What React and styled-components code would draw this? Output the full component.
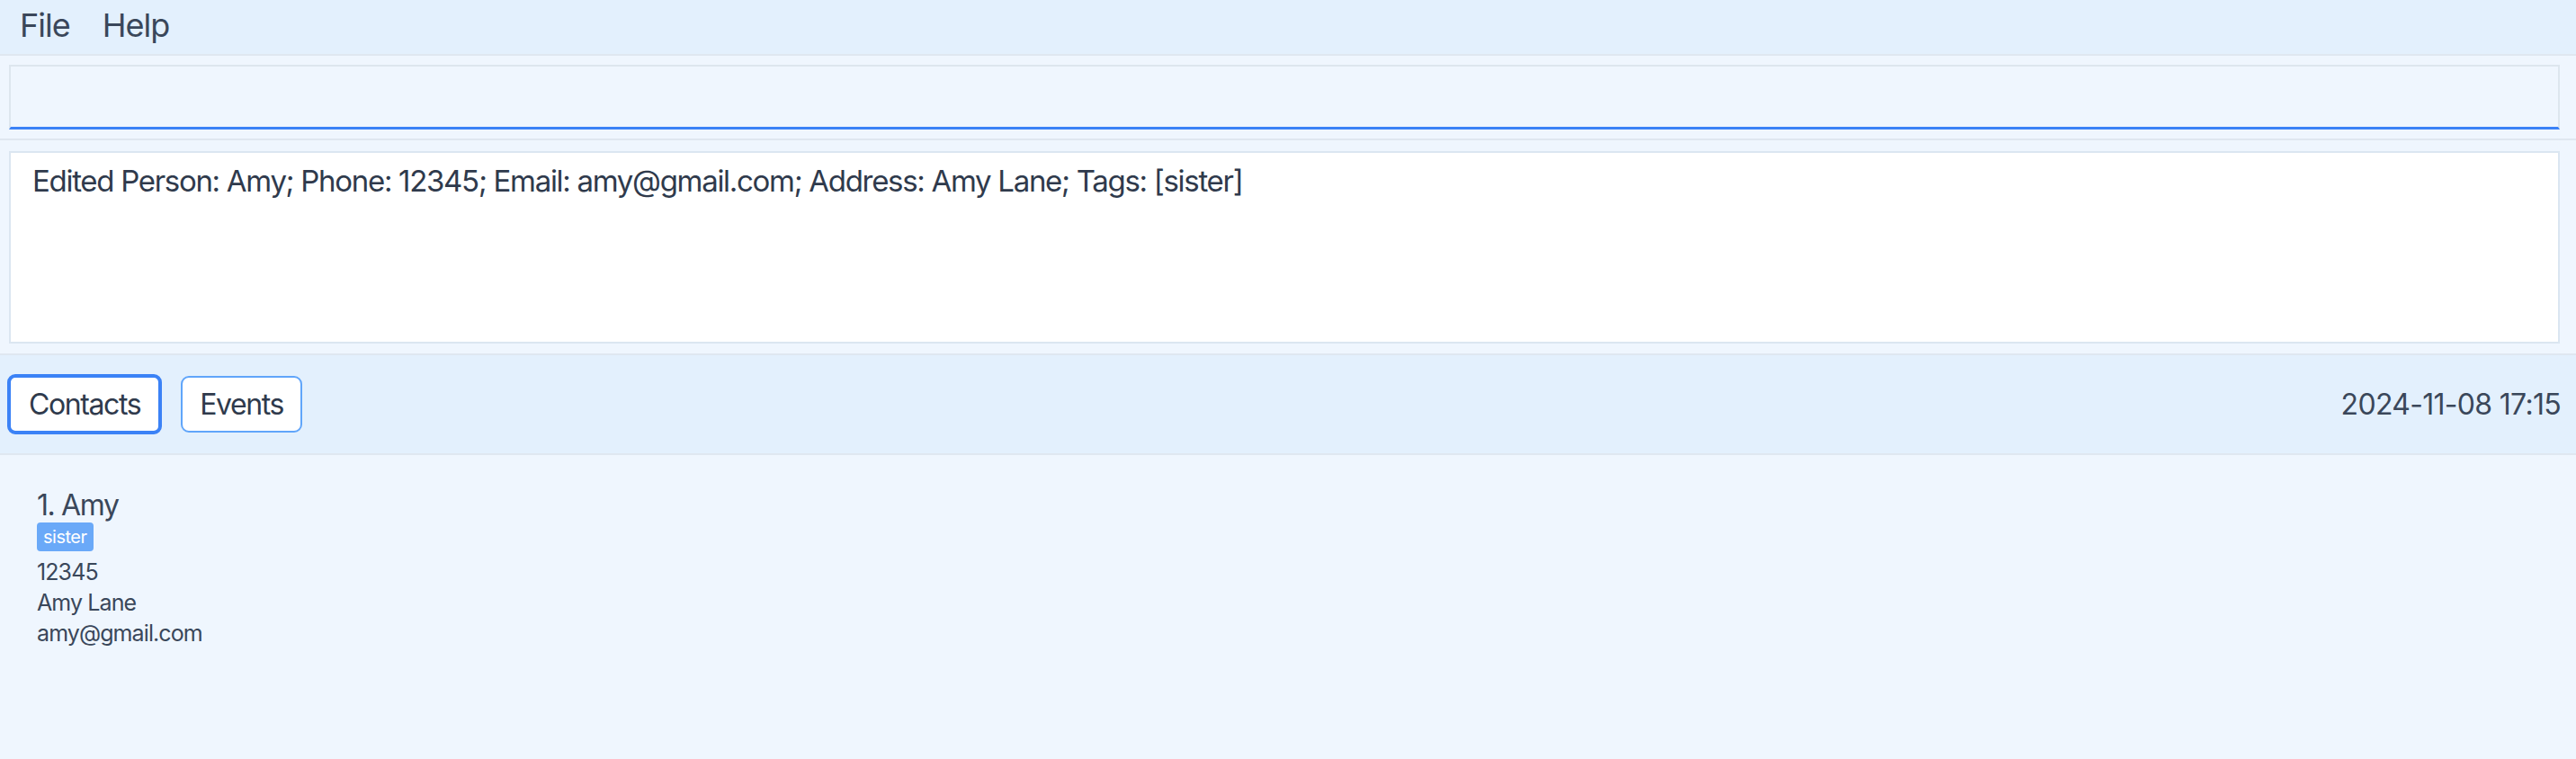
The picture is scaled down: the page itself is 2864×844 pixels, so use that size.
import styled, { createGlobalStyle } from "styled-components";

const GlobalStyle = createGlobalStyle`
  html, body {
    margin: 0;
    padding: 0;
    background: #eff6fe;
    font-family: Inter, "Noto Sans", sans-serif;
    color: #374357;
  }
  * {
    box-sizing: border-box;
  }
`;

const App = () => {
  return (
    <>
      <GlobalStyle />
      <Page>
        <MenuBar>
          <MenuItem>File</MenuItem>
          <MenuItem>Help</MenuItem>
        </MenuBar>
        <CommandArea>
          <CommandInput type="text" />
        </CommandArea>
        <ResultArea>
          <ResultBox>
            Edited Person: Amy; Phone: 12345; Email: amy@gmail.com; Address: Amy Lane; Tags: [sister]
          </ResultBox>
        </ResultArea>
        <TabBar>
          <Tabs>
            <TabButton $active>Contacts</TabButton>
            <TabButton>Events</TabButton>
          </Tabs>
          <Clock>2024-11-08 17:15</Clock>
        </TabBar>
        <ListPanel>
          <Card>
            <Name>1. Amy</Name>
            <TagRow>
              <Tag>sister</Tag>
            </TagRow>
            <Field>12345</Field>
            <Field>Amy Lane</Field>
            <Field>amy@gmail.com</Field>
          </Card>
        </ListPanel>
      </Page>
    </>
  );
};

export const Page = styled.div`
  width: 100%;
  min-height: 844px;
  display: flex;
  flex-direction: column;
  background: #eff6fe;
`;
export const MenuBar = styled.div`
  height: 62px;
  display: flex;
  align-items: center;
  gap: 36px;
  padding: 0 0 4px 22px;
  background: #e3f0fd;
  border-bottom: 2px solid #dfe7f0;
`;
export const MenuItem = styled.span`
  font-size: 36px;
  font-weight: 400;
  letter-spacing: -1px;
  color: #3a475a;
`;
export const CommandArea = styled.div`
  padding: 10px 18px 10px 10px;
  border-bottom: 2px solid #dfe7f0;
`;
export const CommandInput = styled.input`
  display: block;
  width: 100%;
  height: 72px;
  margin: 0;
  background: #eff6fe;
  border: 2px solid #dde6ee;
  border-bottom: 3px solid #3b82f6;
  outline: none;
  font-family: inherit;
  font-size: 32px;
  padding: 0 20px;
`;
export const ResultArea = styled.div`
  padding: 12px 18px 11px 10px;
  border-bottom: 2px solid #dfe7f0;
`;
export const ResultBox = styled.div`
  height: 214px;
  background: #ffffff;
  border: 2px solid #dbe6f1;
  padding: 12px 24px;
  font-size: 33px;
  letter-spacing: -1.3px;
  line-height: 1.2;
  color: #2f3a4c;
`;
export const TabBar = styled.div`
  height: 111px;
  display: flex;
  align-items: center;
  justify-content: space-between;
  padding: 0 17px 0 8px;
  background: #e3f0fd;
  border-bottom: 2px solid #dfe7f0;
`;
export const Tabs = styled.div`
  display: flex;
  align-items: center;
  gap: 21px;
`;
export const TabButton = styled.button`
  height: ${(p) => (p.$active ? "67px" : "63px")};
  padding: 0 ${(p) => (p.$active ? "20px" : "19px")};
  background: #ffffff;
  border: ${(p) => (p.$active ? "4px solid #3b82f6" : "2px solid #60a5fa")};
  border-radius: 9px;
  font-family: inherit;
  font-size: 32px;
  letter-spacing: -1.4px;
  color: #2f3a4c;
  cursor: pointer;
`;
export const Clock = styled.span`
  font-size: 32px;
  letter-spacing: -0.7px;
  color: #3a475a;
`;
export const ListPanel = styled.div`
  flex: 1;
  padding: 36px 41px;
`;
export const Card = styled.div`
  display: flex;
  flex-direction: column;
  align-items: flex-start;
`;
export const Name = styled.div`
  font-size: 32px;
  letter-spacing: -1.4px;
  color: #3a475a;
`;
export const TagRow = styled.div`
  display: flex;
  gap: 6px;
  margin-bottom: 6px;
`;
export const Tag = styled.span`
  height: 32px;
  line-height: 32px;
  padding: 0 7px;
  border-radius: 4px;
  background: #6aa9f8;
  color: #ffffff;
  font-size: 20px;
  letter-spacing: -0.5px;
`;
export const Field = styled.div`
  font-size: 25px;
  line-height: 34px;
  letter-spacing: -0.9px;
  color: #3a475a;
`;

export default App;
